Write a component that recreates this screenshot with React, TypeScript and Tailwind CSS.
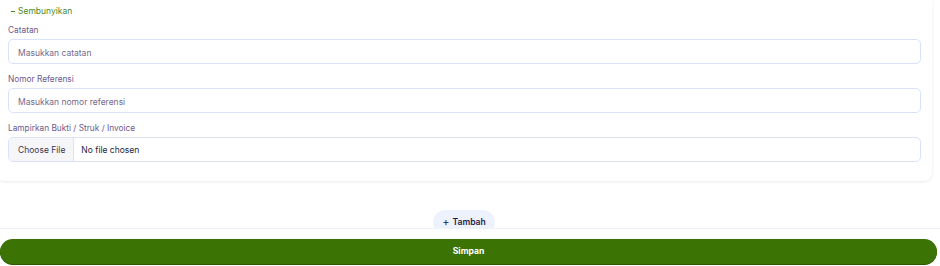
import { useState } from 'react';

// --- CHAMPS DU FORMULAIRE ---

const Field = ({ label, placeholder, first }: { label: string, placeholder: string, first?: boolean }) => (
    <div className={first ? 'mt-[4px]' : 'mt-[7px]'}>
        <label className="block pt-[1px] text-[8.3px] leading-[14px] text-[#6a5a90] mb-[2px]">{label}</label>
        <input
            type="text"
            placeholder={placeholder}
            className="block w-full h-[25px] rounded-[5px] border border-[#d9e2fb] bg-white px-[9px] pt-[2px] text-[8.5px] text-[#1f1d3a] placeholder:text-[#736a8e] outline-none"
        />
    </div>
);

const FileField = ({ label }: { label: string }) => (
    <div className="mt-[7px]">
        <label className="block pt-[1px] text-[8.3px] leading-[14px] text-[#6a5a90] mb-[2px]">{label}</label>
        <div className="flex h-[25px] w-full overflow-hidden rounded-[5px] border border-[#d9e2fb] bg-white text-[8.5px]">
            <span className="flex items-center bg-[#f6f6f9] border-r border-[#dfe3ef] pl-[9px] pr-[8px] pt-[2px] text-[#3a3850]">Choose File</span>
            <span className="flex items-center pl-[7px] pt-[2px] text-[#1f1d3a]">No file chosen</span>
        </div>
    </div>
);

export default function App() {
    const [open, setOpen] = useState(true);

    return (
        <div className="relative h-[266px] w-[940px] overflow-hidden bg-white" style={{ fontFamily: 'Inter, "Noto Sans", sans-serif' }}>
            {/* CARTE */}
            <div className="ml-[-4px] w-[936px] rounded-b-[8px] bg-white pl-3 pr-[11px] pt-[5px] pb-[19px] shadow-[0_1px_3px_rgba(30,40,90,0.10)]">
                <button onClick={() => setOpen(!open)} className="flex items-center pl-[3px] text-[8.5px] leading-[13px] text-[#4a8a1c]">
                    <span className="mr-[3px] inline-block h-[1px] w-[4px] bg-[#4a8a1c]"></span>Sembunyikan
                </button>
                {open && (
                    <>
                        <Field first label="Catatan" placeholder="Masukkan catatan" />
                        <Field label="Nomor Referensi" placeholder="Masukkan nomor referensi" />
                        <FileField label="Lampirkan Bukti / Struk / Invoice" />
                    </>
                )}
            </div>

            {/* AJOUTER */}
            <div className="ml-[-4px] w-[936px] mt-[29px] flex justify-center">
                <button className="flex h-[25px] items-center gap-[3px] rounded-full bg-[#eef2fc] px-[9px] text-[8.6px] font-semibold text-[#1e1f4a]">
                    <span className="text-[11px] font-normal leading-none">+</span>Tambah
                </button>
            </div>

            {/* BARRE DU BAS */}
            <div className="absolute left-0 top-[228px] h-[38px] w-[940px] border-t border-[#eef2fb] bg-white pt-[10px]">
                <button className="block h-[25px] w-[937px] rounded-full bg-[#3b7305] text-[8.6px] font-bold text-white shadow-[0_1px_0_#2c5a03]">
                    Simpan
                </button>
            </div>
        </div>
    );
}
